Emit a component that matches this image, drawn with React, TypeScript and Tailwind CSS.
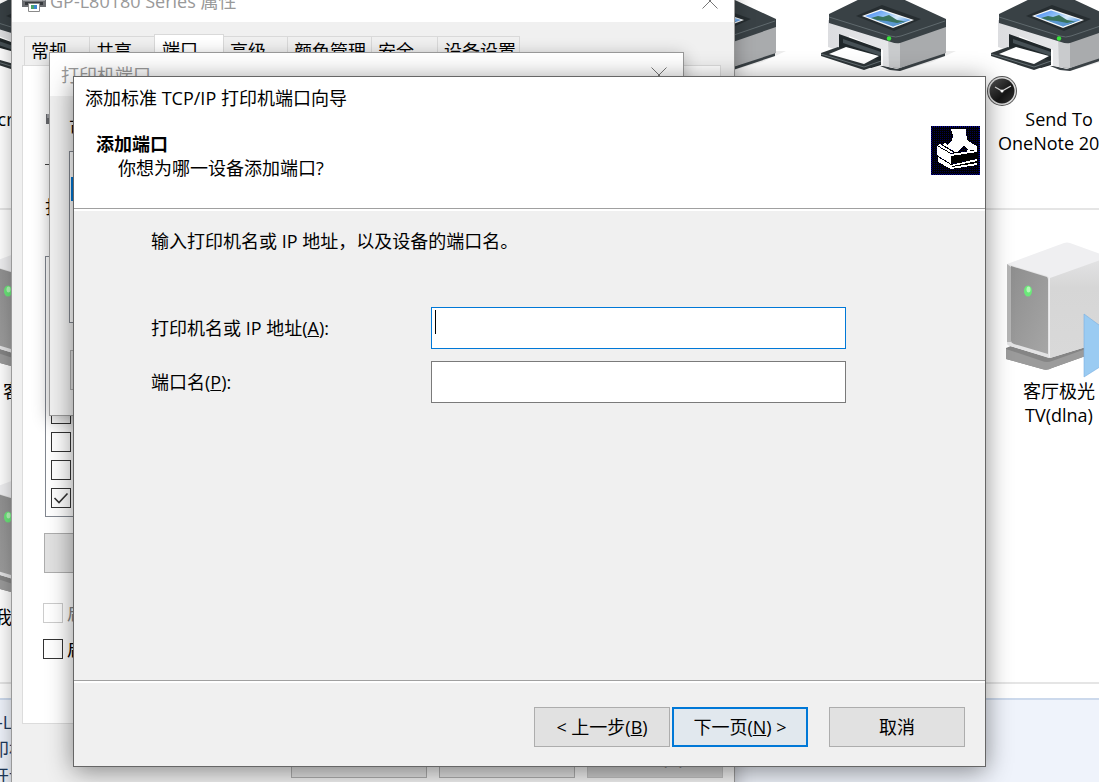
import React from 'react';

type DeviceKind = 'printer' | 'server';

type Device = {
  kind: DeviceKind;
  column: string;
  lines: string[];
  badge?: boolean;
};

const printers: Device[] = [
  { kind: 'printer', column: 'col-start-1', lines: ['Microsoft Print', 'to PDF'] },
  { kind: 'printer', column: 'col-start-5', lines: [] },
  { kind: 'printer', column: 'col-start-6', lines: [], badge: true },
  { kind: 'printer', column: 'col-start-7', lines: ['Send To', 'OneNote 2016'], badge: true },
];

const mediaDevices: Device[] = [
  { kind: 'server', column: 'col-start-1', lines: ['客厅电视'] },
  { kind: 'server', column: 'col-start-7', lines: ['客厅极光', 'TV(dlna)'] },
];

const otherDevices: Device[] = [
  { kind: 'server', column: 'col-start-1', lines: ['我的小电视'] },
];

const tabs = [
  { label: '常规', width: 'w-[66px]' },
  { label: '共享', width: 'w-[66px]' },
  { label: '端口', width: 'w-[70px]', active: true },
  { label: '高级', width: 'w-[65px]' },
  { label: '颜色管理', width: 'w-[85px]' },
  { label: '安全', width: 'w-[67px]' },
  { label: '设备设置', width: 'w-[83px]' },
];

const ports = [
  { name: 'COM3:', checked: false },
  { name: 'COM4:', checked: false },
  { name: 'FILE:', checked: false },
  { name: 'USB001', checked: true },
];

const PrinterIcon = () => (
  <svg viewBox="0 0 138 80" className="block h-[80px] w-[138px]" aria-hidden="true">
    <defs>
      <linearGradient id="printer-front" x1="0" x2="1">
        <stop offset="0" stopColor="#dcdde0" />
        <stop offset="0.88" stopColor="#e6e7e9" />
        <stop offset="1" stopColor="#b4b6b8" />
      </linearGradient>
      <linearGradient id="printer-sky" x1="0" x2="1" y2="0.6">
        <stop offset="0" stopColor="#3f83f2" />
        <stop offset="0.45" stopColor="#8fc0f8" />
        <stop offset="0.7" stopColor="#d8ecfb" />
        <stop offset="1" stopColor="#5c9be4" />
      </linearGradient>
    </defs>
    <path d="M76 70L126 51L136 51L112 62L80 71Z" fill="#ededed" />
    <path d="M65 66L77 69L125 51V56L80 71L70 70L60 66Z" fill="#3a4145" />
    <path d="M8 20L70 38L78 40V69L63 66V50L29 36V54L8 47Z" fill="url(#printer-front)" />
    <path d="M76 40L126 24V53L80 68L73 68Z" fill="#a9abad" />
    <path d="M68 38L80 40V68L69 67Z" fill="#c9cbcd" />
    <path d="M9 14L48 -5H74L126 19V27L80 43Q76 44 71 42L9 23Z" fill="#394145" />
    <path d="M9 17L70 36Q76 38 81 36L125 21" fill="none" stroke="#606a6e" strokeWidth="1" />
    <path d="M36 16L62 5L101 19L74 31Z" fill="#262d30" />
    <path d="M42 16L61 9L94 20L73 28Z" fill="#f5f7f8" />
    <path d="M45 16L61 10.5L91 20L73 26.5Z" fill="url(#printer-sky)" />
    <path d="M51 18L58 16L63 17L69 15L77 20L86 21.5L80 24L73 25.5Z" fill="#39735f" />
    <path d="M56 20L67 21L77 23L88 20.5L73 26.5Z" fill="#5a96cf" />
    <circle cx="69" cy="38.5" r="2.2" fill="#39e53b" />
    <path d="M19 34L61 49V65L51 68L28 57L19 48Z" fill="#20272a" />
    <path d="M23 39L61 52V56L23 43Z" fill="#465055" />
    <path d="M1 53L18 47L61 61V64L44 70L1 56Z" fill="#2e3538" />
    <path d="M9 54L26 47L59 56L44 64Z" fill="#fff" />
    <path d="M1 54L44 67L61 61" fill="none" stroke="#667074" />
  </svg>
);

const ServerIcon = () => (
  <svg viewBox="0 -1 110 140" className="block h-[140px] w-[110px]" aria-hidden="true">
    <defs>
      <linearGradient id="server-front" y2="1">
        <stop offset="0" stopColor="#8e8e8e" />
        <stop offset="1" stopColor="#a6a6a6" />
      </linearGradient>
      <linearGradient id="server-side" x2="0" y2="1">
        <stop offset="0" stopColor="#e4e4e5" />
        <stop offset="0.3" stopColor="#d6d6d6" />
        <stop offset="1" stopColor="#d9d9d9" />
      </linearGradient>
    </defs>
    <path d="M2 108L7 106L45 117L104 98V108L48 128Q43 131 38 129L2 119Z" fill="#858585" />
    <path d="M2 109L38 121Q43 123 48 121L104 101V108L48 128Q43 131 38 129L2 119Z" fill="#9b9b9b" />
    <path d="M3 24L60 3Q63 2 66 3L105 17V100L46 118L3 105Z" fill="#efeff1" />
    <path d="M46 38L105 17V100L46 118Z" fill="url(#server-side)" />
    <path d="M3 24L43 36Q45 37 45 39V118L6 106Q3 105 3 102Z" fill="#e3e3e4" />
    <path d="M3 24L7 27V102L3 102Z" fill="#b5b5b5" />
    <path d="M7 26L43 37Q44 38 44 40V114L10 104Q7 103 7 101Z" fill="url(#server-front)" />
    <ellipse cx="24" cy="51" rx="4" ry="5.5" fill="#6be87a" />
    <ellipse cx="24.5" cy="49.5" rx="2" ry="3" fill="#b5f9b8" />
    <path d="M80 74L110 96V118L80 137Z" fill="#9acbf2" stroke="#78afe0" strokeWidth="0.6" />
  </svg>
);

const ClockBadge = () => (
  <svg viewBox="0 0 32 32" className="absolute left-3 top-[75px] size-8" aria-hidden="true">
    <defs>
      <linearGradient id="clock-face" x1="0" x2="1" y2="1">
        <stop offset="0" stopColor="#555" />
        <stop offset="0.6" stopColor="#161616" />
        <stop offset="1" stopColor="#333" />
      </linearGradient>
    </defs>
    <circle cx="16" cy="16" r="15" fill="#555" />
    <circle cx="16" cy="16" r="14" fill="#dcdcdc" />
    <circle cx="16" cy="16" r="12.5" fill="url(#clock-face)" />
    <path d="M9 12L16 16L25 11" fill="none" stroke="#d6d6d6" strokeWidth="1.4" />
    <circle cx="16" cy="16" r="1.5" fill="#fff" />
  </svg>
);

// Old 1-bit style device picture on a dithered ground
const WizardIcon = () => (
  <svg viewBox="0 0 49 49" className="size-[49px] shrink-0" shapeRendering="crispEdges" aria-hidden="true">
    <defs>
      <pattern id="dither" width="2" height="2" patternUnits="userSpaceOnUse">
        <rect width="2" height="2" fill="#000" />
        <rect x="1" y="1" width="1" height="1" fill="#000050" />
      </pattern>
    </defs>
    <rect width="49" height="49" fill="#000" />
    <rect width="49" height="49" fill="url(#dither)" />
    <rect x="0.5" y="0.5" width="48" height="48" fill="none" stroke="#0000a0" strokeDasharray="1 1" />
    <path d="M20 3H35V8L36 12L37 15L46 20V25L43 24L34 25L38 24L33 20L26 26L17 19L21 14L22 10L21 6Z" fill="#fff" />
    <path d="M6 19L9 18L23 27H20Z" fill="#fff" />
    <path d="M11 18L14 17L27 26H24Z" fill="#fff" />
    <path d="M6 20L20 28L46 24V26L20 30V38L6 29Z" fill="#fff" />
    <path d="M20 30L46 26V33L20 37Z" fill="#000" />
    <path d="M7 31L20 39L46 33V35L20 41L46 37V39L20 43L7 36Z" fill="#fff" />
    <path d="M21 40L46 35V37L21 41Z" fill="#000" />
  </svg>
);

const CloseIcon = () => (
  <svg viewBox="0 0 16 16" className="size-4" aria-hidden="true">
    <path d="M0.5 0.5L15.5 15.5M15.5 0.5L0.5 15.5" stroke="#777" fill="none" />
  </svg>
);

const SmallPrinterIcon = () => (
  <svg viewBox="0 0 24 24" className="size-6" aria-hidden="true">
    <path d="M5 1H19V9H5Z" fill="#eee" stroke="#888" />
    <path d="M0 8H24V18H0Z" fill="#6c6e72" />
    <path d="M1 8H23V12H1Z" fill="#a2a4a8" />
    <path d="M3 13H21V16H3Z" fill="#36393d" />
    <path d="M6.5 14.5H17.5V22.5H6.5Z" fill="#fff" stroke="#8a8a8a" />
    <path d="M9 16H12V20H9Z" fill="#49a36a" />
    <path d="M12 16H15V20H12Z" fill="#3b86d0" />
  </svg>
);

const DeviceItem = ({ kind, column, lines, badge }: Device) => (
  <div className={`relative flex flex-col items-center ${column}`}>
    {kind === 'printer' ? <PrinterIcon /> : <ServerIcon />}
    {badge && <ClockBadge />}
    <div className={`text-center ${kind === 'printer' ? 'pt-[27px]' : ''}`}>
      {lines.map(line => (
        <div key={line} className="whitespace-nowrap">{line}</div>
      ))}
    </div>
  </div>
);

const DeviceRow = ({ devices }: { devices: Device[] }) => (
  <div className="-ml-[46px] grid grid-cols-[repeat(7,170px)]">
    {devices.map((device, i) => <DeviceItem key={i} {...device} />)}
  </div>
);

const CheckBox = ({ label, checked = false, disabled = false }: { label: string; checked?: boolean; disabled?: boolean }) => (
  <label className={`flex items-center gap-1 whitespace-nowrap ${disabled ? 'text-[#838383]' : ''}`}>
    <span className="grid shrink-0">
      <input
        type="checkbox"
        defaultChecked={checked}
        disabled={disabled}
        className="peer col-start-1 row-start-1 size-5 appearance-none border border-[#333] bg-white disabled:border-[#ccc]"
      />
      <svg viewBox="0 0 20 20" className="pointer-events-none invisible col-start-1 row-start-1 size-5 peer-checked:visible" aria-hidden="true">
        <path d="M3.5 10L8 14.5L16.5 5.5" fill="none" stroke="#333" strokeWidth="1.6" />
      </svg>
    </span>
    {label}
  </label>
);

type DialogButtonProps = {
  children: React.ReactNode;
  width?: string;
  primary?: boolean;
  disabled?: boolean;
};

const DialogButton = ({ children, width = 'w-[136px]', primary = false, disabled = false }: DialogButtonProps) => (
  <button
    type="button"
    disabled={disabled}
    className={`h-10 whitespace-nowrap ${width} ${
      primary
        ? 'border-2 border-[#0078d7] bg-[#e1e8ee]'
        : disabled
          ? 'border border-[#bfbfbf] bg-[#ccc] text-[#838383]'
          : 'border border-[#adadad] bg-[#e1e1e1]'
    }`}
  >
    {children}
  </button>
);

const DevicesPage = () => (
  <div className="flex h-full flex-col">
    <div className="h-[208px] shrink-0">
      <DeviceRow devices={printers} />
    </div>
    <div className="h-[474px] shrink-0 border-t-2 border-[#e5e5e5] pt-[29px]">
      <DeviceRow devices={mediaDevices} />
      <div className="pt-[38px]">
        <DeviceRow devices={otherDevices} />
      </div>
    </div>
    <div className="h-4 shrink-0 border-t-2 border-[#e5e5e5]" />
    <div className="flex-1 border-t-2 border-[#ccd9ec] bg-[#eff3fb] pt-[9px] text-[#1e395b]">
      <div className="-ml-[27px] leading-[27px]">
        <div>GP-L80180 Series</div>
        <div>打印机</div>
        <div>打开设置</div>
      </div>
    </div>
  </div>
);

const PropertiesWindow = () => (
  <div className="absolute -top-[21px] left-[11px] h-[820px] w-[724px] border-x border-[#999] bg-[#f0f0f0] shadow-[0_4px_18px_rgba(0,0,0,0.3)]">
    <div className="flex h-[43px] items-center justify-between bg-white pl-[10px] pr-4 text-[#999]">
      <div className="flex items-center gap-1">
        <SmallPrinterIcon />
        <span>GP-L80180 Series 属性</span>
      </div>
      <button type="button" aria-label="关闭"><CloseIcon /></button>
    </div>
    <div className="pl-[10px] pr-[13px] pt-3">
      <div className="flex items-end pl-[2px]" role="tablist">
        {tabs.map(tab => (
          <button
            key={tab.label}
            type="button"
            role="tab"
            aria-selected={!!tab.active}
            className={`-mr-px whitespace-nowrap border border-b-0 border-[#d9d9d9] pl-[6px] text-left ${tab.width} ${
              tab.active ? 'h-[31px] bg-white pl-[7px]' : 'h-[29px] bg-[#f0f0f0]'
            }`}
          >
            {tab.label}
          </button>
        ))}
      </div>
      <div className="h-[659px] border border-[#dcdcdc] bg-white pl-5 pr-5 pt-10">
        <div className="flex h-6 items-center pl-[3px]">
          <SmallPrinterIcon />
        </div>
        <div className="ml-[2px] mt-[34px] border-t border-[#444]" />
        <div className="flex h-[91px] items-center whitespace-nowrap pb-2 pl-[2px]">打印到下列端口(P)。文档将打印到第一个被选中的可用端口。</div>
        <div className="ml-[2px] flex h-[261px] flex-col justify-end border border-[#828790] bg-white pb-1 pl-[5px]">
          {ports.map(port => (
            <div key={port.name} className="flex h-7 items-center">
              <CheckBox label={port.name} checked={port.checked} />
            </div>
          ))}
        </div>
        <div className="ml-px mt-4">
          <DialogButton width="w-[211px]">添加端口(T)...</DialogButton>
        </div>
        <div className="flex flex-col gap-3 pt-7">
          <CheckBox label="启用双向支持(E)" disabled />
          <CheckBox label="启用打印机池(N)" />
        </div>
      </div>
      <div className="-mr-[2px] flex justify-end gap-3 pt-[14px]">
        <DialogButton>确定</DialogButton>
        <DialogButton>取消</DialogButton>
        <DialogButton disabled>应用(A)</DialogButton>
      </div>
    </div>
  </div>
);

const PortTypeWindow = () => (
  <div className="absolute left-[49px] top-[52px] h-[364px] w-[635px] border border-[#999] bg-[#f0f0f0] shadow-[0_4px_16px_rgba(0,0,0,0.3)]">
    <div className="flex h-[43px] items-center justify-between bg-white pl-[11px] pr-4 text-[#999]">
      <span>打印机端口</span>
      <button type="button" aria-label="关闭"><CloseIcon /></button>
    </div>
    <div className="px-[19px] pt-[20px]">
      <div>可用的端口类型(A):</div>
      <div className="mt-[11px] h-[172px] border border-[#828790] bg-white px-px pt-[25px]">
        <div className="h-6 bg-[#0078d7]" />
      </div>
      <div className="pl-px pt-[27px]">
        <DialogButton width="w-[180px]">新端口类型(N)...</DialogButton>
      </div>
    </div>
  </div>
);

const WizardWindow = () => (
  <div className="absolute left-[73px] top-[76px] flex h-[691px] w-[913px] flex-col border border-[#666] bg-[#f0f0f0] shadow-[0_4px_24px_rgba(0,0,0,0.45)]">
    <div className="bg-white">
      <div className="flex h-[42px] items-center pl-[11px]">添加标准 TCP/IP 打印机端口向导</div>
      <div className="flex h-[89px] justify-between pl-[22px] pr-[5px] pt-[7px]">
        <div className="pt-[6px]">
          <h1 className="font-bold">添加端口</h1>
          <p className="pl-[22px]">你想为哪一设备添加端口?</p>
        </div>
        <WizardIcon />
      </div>
    </div>
    <div className="h-[3px] border-b-2 border-t border-b-white border-t-[#a0a0a0]" />
    <form className="flex-1 pl-[77px] pr-[139px] pt-[18px]">
      <p>输入打印机名或 IP 地址，以及设备的端口名。</p>
      <div className="grid grid-cols-[280px_1fr] items-center gap-y-3 pt-[54px]">
        <label htmlFor="host">打印机名或 IP 地址(<u>A</u>):</label>
        <div className="relative">
          <input id="host" type="text" className="block h-[42px] w-full border border-[#0078d7] bg-white px-1 outline-none" />
          <span className="absolute left-1 top-[3px] h-6 w-px bg-black" />
        </div>
        <label htmlFor="port">端口名(<u>P</u>):</label>
        <input id="port" type="text" className="block h-[42px] w-full border border-[#7a7a7a] bg-white px-1 outline-none" />
      </div>
    </form>
    <div className="h-[3px] border-b-2 border-t border-b-white border-t-[#a0a0a0]" />
    <div className="flex justify-end pb-[19px] pr-5 pt-6">
      <div className="mr-[21px] flex gap-[2px]">
        <DialogButton>&lt; 上一步(<u>B</u>)</DialogButton>
        <DialogButton primary>下一页(<u>N</u>) &gt;</DialogButton>
      </div>
      <DialogButton>取消</DialogButton>
    </div>
  </div>
);

export default function App() {
  return (
    <div className="relative h-screen overflow-hidden bg-white font-['Open_Sans','Noto_Sans_CJK_SC',sans-serif] text-[18px] leading-6 text-black">
      <DevicesPage />
      <PropertiesWindow />
      <PortTypeWindow />
      <WizardWindow />
    </div>
  );
}
